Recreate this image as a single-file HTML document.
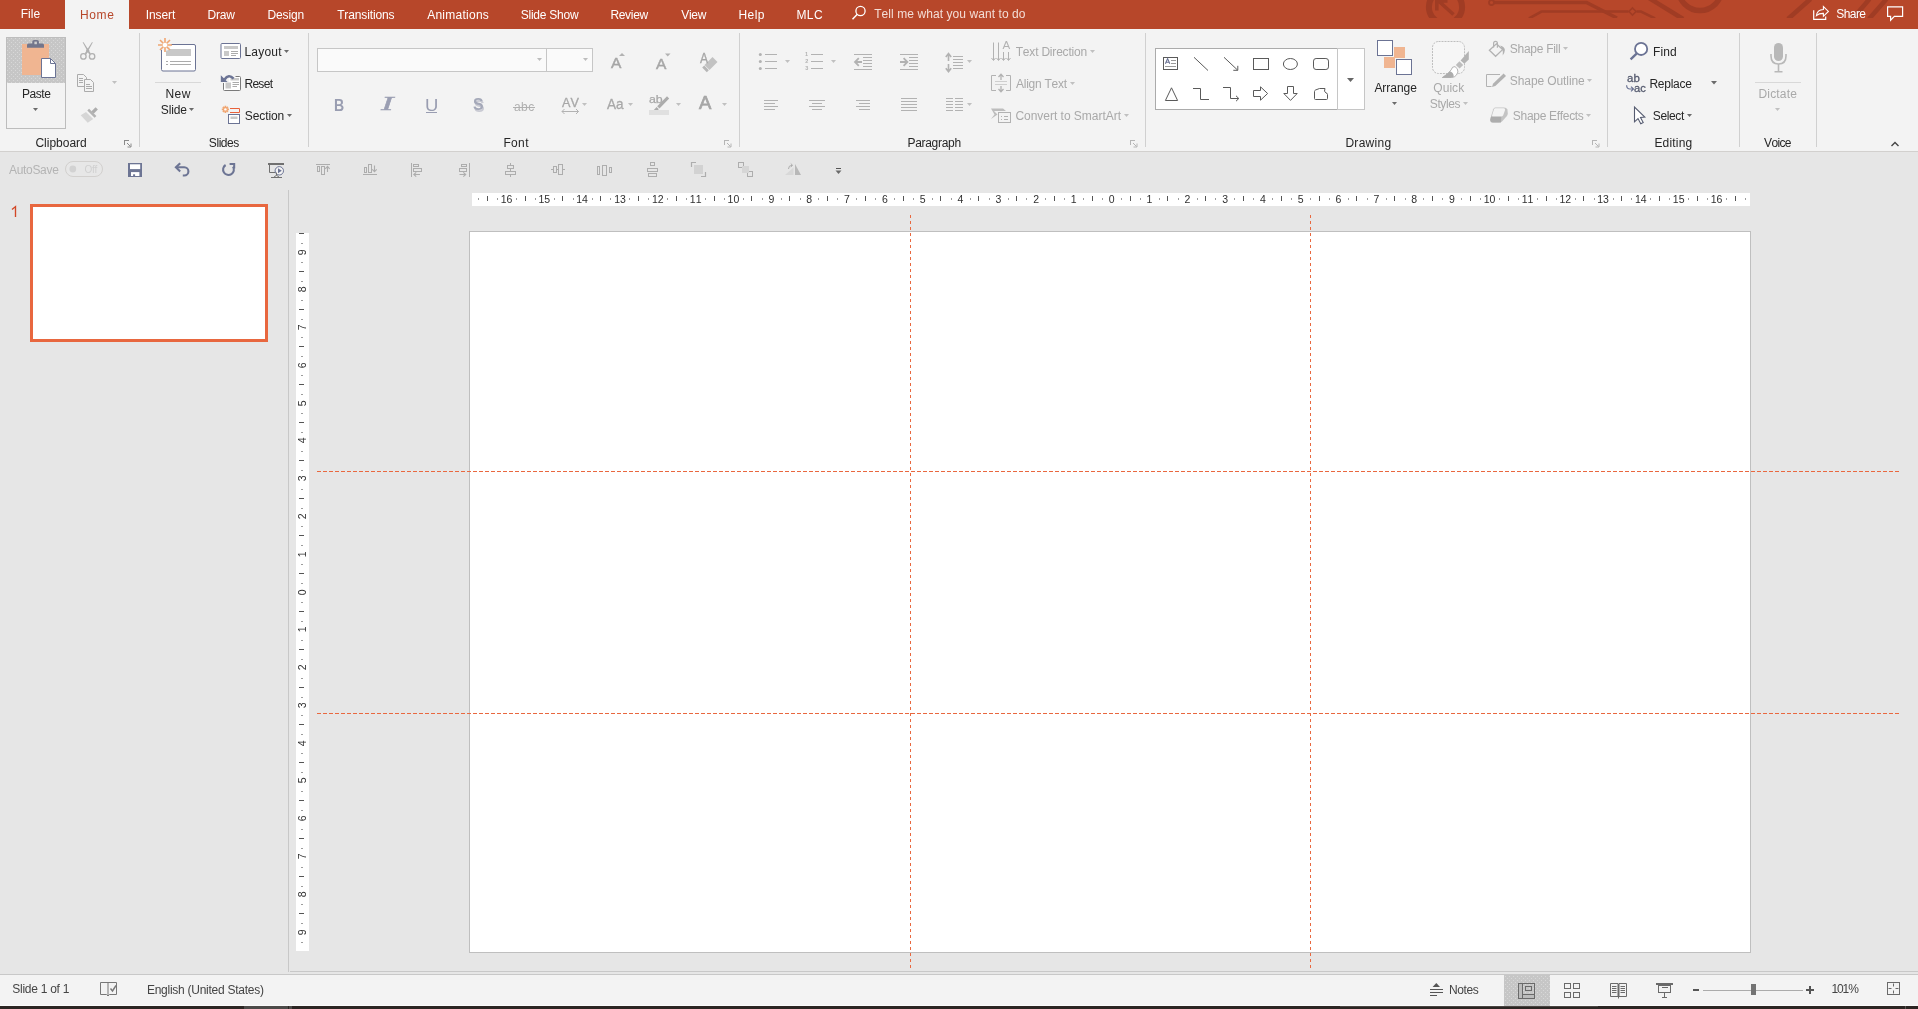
<!DOCTYPE html>
<html><head><meta charset="utf-8"><title>PowerPoint</title>
<style>
html,body{margin:0;padding:0;}
body{width:1918px;height:1009px;overflow:hidden;background:#E6E6E6;font-family:"Liberation Sans",sans-serif;font-kerning:none;}
#app{position:relative;width:1918px;height:1009px;overflow:hidden;background:#E6E6E6;}
#gfx{position:absolute;left:0;top:0;}
.t{position:absolute;white-space:pre;}
#txt{position:absolute;left:0;top:0;width:1918px;height:1009px;will-change:transform;}
.d{position:absolute;}
</style></head><body><div id="app">

<svg id="gfx" width="1918" height="1009" viewBox="0 0 1918 1009">
<rect x="0" y="0" width="1918" height="29" fill="#B7472A" />
<g clip-path="url(#cpat)" fill="none" stroke="#A03C24" stroke-linecap="butt">
<circle cx="1445.5" cy="7" r="16.6" stroke-width="6"/>
<path d="M1453.5 14.5 L1438 0.5 M1436.8 10.5 V1 H1447.5" stroke-width="3.6"/>
<path d="M1494 2.5 H1586.5 L1617 18" stroke-width="3.5"/>
<circle cx="1491.5" cy="2.5" r="2.5" stroke-width="1.8"/>
<path d="M1529 18.5 L1541.5 11.5 H1628.5 M1636.5 11.5 H1641 L1655 18.5" stroke-width="2.6"/>
<path d="M1632.5 8 l3.5 3.5 l-3.5 3.5 l-3.5 -3.5 z" stroke-width="1.6"/>
<path d="M1649 -2 L1683 19" stroke-width="4.5"/>
<circle cx="1700" cy="-11" r="21.5" stroke-width="5.5"/>
<path d="M1788 19 L1810.5 -1 M1869 19 L1886.5 -1 M1852.5 19 L1869.5 -1" stroke-width="4.6"/>
</g>
<defs><clipPath id="cpat"><rect x="1400" y="0" width="518" height="18"/></clipPath></defs>
<rect x="65" y="0" width="64" height="29" fill="#F3F3F3" />
<rect x="0" y="29" width="1918" height="122" fill="#F3F3F3" />
<rect x="0" y="151" width="1918" height="1" fill="#D2D0CE" shape-rendering="crispEdges"/>
<circle cx="860.5" cy="11" r="4.6" fill="none" stroke="#fff" stroke-width="1.3"/>
<path d="M857.3 14.3 L852.5 19.2" stroke="#fff" stroke-width="1.5"/>
<path d="M1813.7 10.2 V19.3 H1825.7 V16.4" fill="none" stroke="#fff" stroke-width="1.2"/>
<path d="M1816.4 15.7 C1816.9 11.6 1819.6 9.7 1823.4 9.5 V6.5 L1828.4 11.4 L1823.4 16.3 V13.4 C1820.5 13.3 1818.3 14 1816.4 15.7 Z" fill="none" stroke="#fff" stroke-width="1.1" stroke-linejoin="miter"/>
<path d="M1887.6 6.8 H1902.6 V16.4 H1894.4 L1890.6 20.2 V16.4 H1887.6 Z" fill="none" stroke="#fff" stroke-width="1.2"/>
<rect x="139" y="33" width="1" height="114" fill="#D0D0D0" shape-rendering="crispEdges"/>
<rect x="308" y="33" width="1" height="114" fill="#D0D0D0" shape-rendering="crispEdges"/>
<rect x="739" y="33" width="1" height="114" fill="#D0D0D0" shape-rendering="crispEdges"/>
<rect x="1145" y="33" width="1" height="114" fill="#D0D0D0" shape-rendering="crispEdges"/>
<rect x="1607" y="33" width="1" height="114" fill="#D0D0D0" shape-rendering="crispEdges"/>
<rect x="1739" y="33" width="1" height="114" fill="#D0D0D0" shape-rendering="crispEdges"/>
<rect x="1816" y="33" width="1" height="114" fill="#D0D0D0" shape-rendering="crispEdges"/>
<path d="M124.5 145 V140.5 H129" fill="none" stroke="#8A8A8A" stroke-width="1" shape-rendering="crispEdges"/>
<path d="M127 143 L130.5 146.5 M127.5 147 H131 V143.5" fill="none" stroke="#8A8A8A" stroke-width="1" />
<path d="M724.5 145 V140.5 H729" fill="none" stroke="#B5B5B5" stroke-width="1" shape-rendering="crispEdges"/>
<path d="M727 143 L730.5 146.5 M727.5 147 H731 V143.5" fill="none" stroke="#B5B5B5" stroke-width="1" />
<path d="M1130.5 145 V140.5 H1135" fill="none" stroke="#B5B5B5" stroke-width="1" shape-rendering="crispEdges"/>
<path d="M1133 143 L1136.5 146.5 M1133.5 147 H1137 V143.5" fill="none" stroke="#B5B5B5" stroke-width="1" />
<path d="M1592.5 145 V140.5 H1597" fill="none" stroke="#B5B5B5" stroke-width="1" shape-rendering="crispEdges"/>
<path d="M1595 143 L1598.5 146.5 M1595.5 147 H1599 V143.5" fill="none" stroke="#B5B5B5" stroke-width="1" />
<path d="M1891.5 146 L1895 142.5 L1898.5 146" fill="none" stroke="#444" stroke-width="1.4" />
<defs><pattern id="dots" x="6" y="37" width="4" height="4" patternUnits="userSpaceOnUse"><rect width="4" height="4" fill="#C6C6C6"/><rect x="1" y="1" width="1" height="1" fill="#D8D8D8"/><rect x="3" y="3" width="1" height="1" fill="#D8D8D8"/></pattern></defs>
<rect x="6" y="37" width="60" height="46" fill="url(#dots)" />
<rect x="6.5" y="37.5" width="59" height="91" fill="none" stroke="#BDBDBD" stroke-width="1" />
<rect x="22" y="44" width="27" height="31" fill="#F0B591" />
<path d="M27 47.8 V45 Q27 43.4 28.6 43.4 H32.3 V41.6 Q32.3 39.9 34 39.9 H37.2 Q38.9 39.9 38.9 41.6 V43.4 H42.4 Q44 43.4 44 45 V47.8 Z" fill="#73768C"  />
<rect x="34.4" y="41.6" width="2.5" height="2.6" fill="#CFCFCF" />
<path d="M41.5 58.5 H50.5 L55.5 63.5 V77.5 H41.5 Z" fill="#FFFFFF" stroke="#6B7394" stroke-width="1" />
<path d="M50.5 58.5 V63.5 H55.5" fill="none" stroke="#6B7394" stroke-width="1" />
<polygon points="33,108 38,108 35.5,111.0" fill="#6A6A6A"/>
<path d="M82.6 42.2 L83.6 42.2 L90.8 53.6 L89.2 54.6 Z M92.9 42.2 L91.9 42.2 L84.7 53.6 L86.3 54.6 Z" fill="#B0B0B0"  />
<path d="M86 50.5 L87.75 48 L89.5 50.5 L87.75 53 Z" fill="#B0B0B0"  />
<circle cx="83.4" cy="56.4" r="2.7" fill="none" stroke="#B0B0B0" stroke-width="1.3"/>
<circle cx="92.1" cy="56.4" r="2.7" fill="none" stroke="#B0B0B0" stroke-width="1.3"/>
<path d="M77.5 74.5 H83.5 L86.5 77.5 V86.5 H77.5 Z" fill="#F3F3F3" stroke="#ABABAB" stroke-width="1" />
<path d="M84.5 79.5 H90.5 L93.5 82.5 V91.5 H84.5 Z" fill="#F3F3F3" stroke="#ABABAB" stroke-width="1" />
<path d="M79 78.5 H83 M79 80.5 H83 M79 82.5 H83 M86 84.5 H90 M86 86.5 H92 M86 88.5 H92" fill="none" stroke="#ABABAB" stroke-width="1" />
<polygon points="112,81 117,81 114.5,84.0" fill="#C0C0C0"/>
<path d="M95.6 107.2 L97.9 109.5 L93.6 113.8 L91.3 111.5 Z" fill="#ADADAD"  />
<path d="M87.3 110.5 L89.1 108.7 L96.4 116 L94.6 117.8 Z" fill="#B3B3B3"  />
<path d="M86 111.9 L93.2 119.1 L87.7 122.7 L80.7 115.2 Z" fill="#D6D6D6"  />
<path d="M162.5 44.5 H194 Q195.5 44.5 195.5 46 V69.5 Q195.5 71 194 71 H163 Q161.5 71 161.5 69.5 V46 Q161.5 44.5 162.5 44.5 Z" fill="#FFFFFF" stroke="#6B7394" stroke-width="1" />
<rect x="166" y="49" width="25" height="7" fill="#C8C8C8" />
<path d="M166 61.5 H168 M170 61.5 H191 M166 64.5 H168 M170 64.5 H191" fill="none" stroke="#ABABAB" stroke-width="1" />
<circle cx="165" cy="45" r="6" fill="#F3F3F3"/>
<path d="M165 38 V52 M158 45 H172 M160 40 L170 50 M170 40 L160 50" fill="none" stroke="#F0A672" stroke-width="1.6" />
<circle cx="165" cy="45" r="2.3" fill="#FFFFFF"/>
<rect x="155" y="82" width="46" height="1" fill="#D8D8D8" shape-rendering="crispEdges"/>
<polygon points="189,108 194,108 191.5,111.0" fill="#6A6A6A"/>
<path d="M222 43.5 H239.5 Q240.5 43.5 240.5 44.5 V57.5 Q240.5 58.5 239.5 58.5 H222 Q221 58.5 221 57.5 V44.5 Q221 43.5 222 43.5 Z" fill="#FFFFFF" stroke="#6B7394" stroke-width="1" />
<rect x="224" y="46" width="14" height="3" fill="#C9C9C9" />
<rect x="224" y="51" width="5" height="5" fill="#C9C9C9" />
<path d="M231 51.5 H238 M231 53.5 H238 M231 55.5 H236" fill="none" stroke="#ABABAB" stroke-width="1" />
<polygon points="284,50 289,50 286.5,53.0" fill="#6A6A6A"/>
<path d="M235.5 76.5 H239.5 Q240.5 76.5 240.5 77.5 V89.5 Q240.5 90.5 239.5 90.5 H224.5 Q223.5 90.5 223.5 89.5 V83" fill="none" stroke="#7A7A7A" stroke-width="1" />
<rect x="224" y="82.5" width="16" height="7.5" fill="#FFFFFF" />
<rect x="229" y="77" width="11" height="6" fill="#FFFFFF" />
<rect x="230.5" y="78" width="8.5" height="2.5" fill="#C9C9C9" />
<rect x="225.5" y="82.5" width="5.5" height="6" fill="#C9C9C9" />
<path d="M232.5 82.5 H239 M232.5 84.5 H239 M232.5 86.5 H237" fill="none" stroke="#ABABAB" stroke-width="1" />
<path d="M220.8 75.2 V82 H227.6 Z" fill="#6B7394"  />
<path d="M224.6 79.4 Q228.6 73.6 233.6 78.6" fill="none" stroke="#6B7394" stroke-width="2.6" />
<path d="M230 108.5 H239.5 V112.5 H230" fill="none" stroke="#E8613A" stroke-width="1" />
<rect x="228.5" y="114.5" width="11" height="9" fill="#FFFFFF" stroke="#6B7394" stroke-width="1" />
<rect x="230.5" y="116.5" width="7" height="2.5" fill="#C9C9C9" />
<path d="M225.4 105.8 V113 M221.8 109.4 H229 M222.9 106.9 L227.9 111.9 M227.9 106.9 L222.9 111.9" fill="none" stroke="#F0A672" stroke-width="1.7" />
<circle cx="225.4" cy="109.4" r="1.2" fill="#fff"/>
<polygon points="287,114 292,114 289.5,117.0" fill="#6A6A6A"/>
<rect x="317.5" y="48.5" width="229" height="23" fill="#FAFAFA" stroke="#C6C6C6" stroke-width="1" />
<rect x="546.5" y="48.5" width="46" height="23" fill="#FAFAFA" stroke="#C6C6C6" stroke-width="1" />
<polygon points="537,58 542,58 539.5,61.0" fill="#BDBDBD"/>
<polygon points="583,58 588,58 585.5,61.0" fill="#BDBDBD"/>
<rect x="426" y="112" width="11" height="1" fill="#999DB1" shape-rendering="crispEdges"/>
<rect x="513" y="107" width="22" height="1" fill="#B0B0B0" shape-rendering="crispEdges"/>
<polygon points="619,56 622,53 625,56" fill="#B2B2B2"/>
<polygon points="665,53.5 670.5,53.5 667.75,56.5" fill="#B2B2B2"/>
<path d="M712.5 57 L717.5 62 L709.5 70 L704.5 65 Z" fill="#C2C2C2"  />
<path d="M704.3 65.6 L708.8 70.2 L706.8 72.2 L702.2 67.6 Z" fill="#B6B6B6"  />
<path d="M562 111.5 H578.5 M564.5 109 L562 111.5 L564.5 114 M576 109 L578.5 111.5 L576 114" fill="none" stroke="#B2B2B2" stroke-width="1" />
<polygon points="582,103 587,103 584.5,106.0" fill="#C0C0C0"/>
<polygon points="628,103 633,103 630.5,106.0" fill="#C0C0C0"/>
<path d="M667 96.3 L669.2 98.6 L659.5 108.6 L657.2 106.3 Z M656.6 107 L658.9 109.3 L657.5 110.2 H653.6 Z" fill="#ACACAC"  />
<rect x="649" y="110" width="20" height="5" fill="#E0E0E0" />
<polygon points="676,103 681,103 678.5,106.0" fill="#C0C0C0"/>
<polygon points="722,103 727,103 724.5,106.0" fill="#C0C0C0"/>
<circle cx="760.3" cy="54.5" r="1.5" fill="#B2B2B2"/>
<rect x="765" y="54.0" width="12" height="1" fill="#B2B2B2" shape-rendering="crispEdges"/>
<circle cx="760.3" cy="61.5" r="1.5" fill="#B2B2B2"/>
<rect x="765" y="61.0" width="12" height="1" fill="#B2B2B2" shape-rendering="crispEdges"/>
<circle cx="760.3" cy="68.5" r="1.5" fill="#B2B2B2"/>
<rect x="765" y="68.0" width="12" height="1" fill="#B2B2B2" shape-rendering="crispEdges"/>
<polygon points="785,60 790,60 787.5,63.0" fill="#C0C0C0"/>
<rect x="811" y="54.0" width="12" height="1" fill="#B2B2B2" shape-rendering="crispEdges"/>
<rect x="811" y="61.0" width="12" height="1" fill="#B2B2B2" shape-rendering="crispEdges"/>
<rect x="811" y="68.0" width="12" height="1" fill="#B2B2B2" shape-rendering="crispEdges"/>
<polygon points="831,60 836,60 833.5,63.0" fill="#C0C0C0"/>
<rect x="854" y="54" width="18" height="1" fill="#B2B2B2" shape-rendering="crispEdges"/>
<rect x="854" y="69" width="18" height="1" fill="#B2B2B2" shape-rendering="crispEdges"/>
<rect x="863" y="57" width="9" height="1" fill="#B2B2B2" shape-rendering="crispEdges"/>
<rect x="863" y="60" width="9" height="1" fill="#B2B2B2" shape-rendering="crispEdges"/>
<rect x="863" y="63" width="9" height="1" fill="#B2B2B2" shape-rendering="crispEdges"/>
<rect x="863" y="66" width="9" height="1" fill="#B2B2B2" shape-rendering="crispEdges"/>
<path d="M862 62 H855.5 M858.8 58.2 L855 62 L858.8 65.8" fill="none" stroke="#B2B2B2" stroke-width="1.8" />
<rect x="900" y="54" width="18" height="1" fill="#B2B2B2" shape-rendering="crispEdges"/>
<rect x="900" y="69" width="18" height="1" fill="#B2B2B2" shape-rendering="crispEdges"/>
<rect x="909" y="57" width="9" height="1" fill="#B2B2B2" shape-rendering="crispEdges"/>
<rect x="909" y="60" width="9" height="1" fill="#B2B2B2" shape-rendering="crispEdges"/>
<rect x="909" y="63" width="9" height="1" fill="#B2B2B2" shape-rendering="crispEdges"/>
<rect x="909" y="66" width="9" height="1" fill="#B2B2B2" shape-rendering="crispEdges"/>
<path d="M900 62 H907 M903.6 58.2 L907.4 62 L903.6 65.8" fill="none" stroke="#B2B2B2" stroke-width="1.8" />
<rect x="953" y="56" width="10" height="1" fill="#B2B2B2" shape-rendering="crispEdges"/>
<rect x="953" y="59" width="10" height="1" fill="#B2B2B2" shape-rendering="crispEdges"/>
<rect x="953" y="62" width="10" height="1" fill="#B2B2B2" shape-rendering="crispEdges"/>
<rect x="953" y="65" width="10" height="1" fill="#B2B2B2" shape-rendering="crispEdges"/>
<rect x="953" y="68" width="10" height="1" fill="#B2B2B2" shape-rendering="crispEdges"/>
<path d="M948.5 54 V61 M945.8 57 L948.5 53.6 L951.2 57 M948.5 64 V71 M945.8 68.2 L948.5 71.6 L951.2 68.2" fill="none" stroke="#B2B2B2" stroke-width="1.6" />
<polygon points="967,60 972,60 969.5,63.0" fill="#C0C0C0"/>
<rect x="764" y="100" width="14" height="1" fill="#B2B2B2" shape-rendering="crispEdges"/>
<rect x="764" y="103" width="11" height="1" fill="#B2B2B2" shape-rendering="crispEdges"/>
<rect x="764" y="106" width="14" height="1" fill="#B2B2B2" shape-rendering="crispEdges"/>
<rect x="764" y="109" width="11" height="1" fill="#B2B2B2" shape-rendering="crispEdges"/>
<rect x="809" y="100" width="16" height="1" fill="#B2B2B2" shape-rendering="crispEdges"/>
<rect x="812" y="103" width="10" height="1" fill="#B2B2B2" shape-rendering="crispEdges"/>
<rect x="809" y="106" width="16" height="1" fill="#B2B2B2" shape-rendering="crispEdges"/>
<rect x="812" y="109" width="10" height="1" fill="#B2B2B2" shape-rendering="crispEdges"/>
<rect x="856" y="100" width="14" height="1" fill="#B2B2B2" shape-rendering="crispEdges"/>
<rect x="859" y="103" width="11" height="1" fill="#B2B2B2" shape-rendering="crispEdges"/>
<rect x="856" y="106" width="14" height="1" fill="#B2B2B2" shape-rendering="crispEdges"/>
<rect x="859" y="109" width="11" height="1" fill="#B2B2B2" shape-rendering="crispEdges"/>
<rect x="901" y="98" width="16" height="1" fill="#B2B2B2" shape-rendering="crispEdges"/>
<rect x="901" y="101" width="16" height="1" fill="#B2B2B2" shape-rendering="crispEdges"/>
<rect x="901" y="104" width="16" height="1" fill="#B2B2B2" shape-rendering="crispEdges"/>
<rect x="901" y="107" width="16" height="1" fill="#B2B2B2" shape-rendering="crispEdges"/>
<rect x="901" y="110" width="16" height="1" fill="#B2B2B2" shape-rendering="crispEdges"/>
<rect x="946" y="98" width="7" height="1" fill="#B2B2B2" shape-rendering="crispEdges"/>
<rect x="955" y="98" width="8" height="1" fill="#B2B2B2" shape-rendering="crispEdges"/>
<rect x="946" y="101" width="7" height="1" fill="#B2B2B2" shape-rendering="crispEdges"/>
<rect x="955" y="101" width="8" height="1" fill="#B2B2B2" shape-rendering="crispEdges"/>
<rect x="946" y="104" width="7" height="1" fill="#B2B2B2" shape-rendering="crispEdges"/>
<rect x="955" y="104" width="8" height="1" fill="#B2B2B2" shape-rendering="crispEdges"/>
<rect x="946" y="107" width="7" height="1" fill="#B2B2B2" shape-rendering="crispEdges"/>
<rect x="955" y="107" width="8" height="1" fill="#B2B2B2" shape-rendering="crispEdges"/>
<rect x="946" y="110" width="7" height="1" fill="#B2B2B2" shape-rendering="crispEdges"/>
<rect x="955" y="110" width="8" height="1" fill="#B2B2B2" shape-rendering="crispEdges"/>
<polygon points="967,103 972,103 969.5,106.0" fill="#C0C0C0"/>
<path d="M993.5 42.5 V60 M998.5 42.5 V60 M991.5 58 L993.5 60.5 L995.5 58 M996.5 58 L998.5 60.5 L1000.5 58" fill="none" stroke="#B2B2B2" stroke-width="1" />
<path d="M1003.5 52 V60 M1008.5 52 V60 M1001.5 58 L1003.5 60.5 L1005.5 58 M1006.5 58 L1008.5 60.5 L1010.5 58" fill="none" stroke="#B2B2B2" stroke-width="1" />
<polygon points="1090,50 1095,50 1092.5,53.0" fill="#C0C0C0"/>
<path d="M996 75.5 H991.5 V90.5 H996 M1006 75.5 H1010.5 V90.5 H1006" fill="none" stroke="#B2B2B2" stroke-width="1" />
<path d="M995 81.5 H1007 M995 84.5 H1007" fill="none" stroke="#CFCFCF" stroke-width="1" />
<path d="M1001 74.5 V80 M998.5 77 L1001 74.3 L1003.5 77 M1001 86 V91.5 M998.5 89 L1001 91.7 L1003.5 89" fill="none" stroke="#B2B2B2" stroke-width="1.3" />
<polygon points="1070,82 1075,82 1072.5,85.0" fill="#C0C0C0"/>
<path d="M991 108.5 H1003 L1006 111 H994 L997.5 114.5 L991 119 L994.5 114.5 Z" fill="#BDBDBD"  />
<rect x="998.5" y="112.5" width="12" height="10" fill="#F3F3F3" stroke="#B2B2B2" stroke-width="1" />
<path d="M1001 116.5 H1002 M1004 116.5 H1008 M1001 119.5 H1002 M1004 119.5 H1008" fill="none" stroke="#B2B2B2" stroke-width="1" />
<polygon points="1124,114 1129,114 1126.5,117.0" fill="#C0C0C0"/>
<rect x="1155.5" y="48.5" width="182" height="61" fill="#FFFFFF" stroke="#ABABAB" stroke-width="1" />
<rect x="1337.5" y="48.5" width="27" height="61" fill="#FFFFFF" stroke="#C6C6C6" stroke-width="1" />
<polygon points="1347,78 1354,78 1350.5,82.0" fill="#666"/>
<rect x="1163.5" y="57.5" width="14" height="12" fill="#FFFFFF" stroke="#5A5A5A" stroke-width="1" />
<path d="M1165.4 63.8 L1167.6 58.6 L1169.8 63.8 M1166.3 62.2 H1168.9" fill="none" stroke="#6B7394" stroke-width="1.1" />
<path d="M1171 60.5 H1176 M1171 63.5 H1176 M1165 66.5 H1176" fill="none" stroke="#9A9A9A" stroke-width="1" />
<path d="M1194 57.3 L1208 70.5" fill="none" stroke="#5A5A5A" stroke-width="1" />
<path d="M1224 57.3 L1237.5 70 M1237.8 65.8 V70.3 H1233.3" fill="none" stroke="#5A5A5A" stroke-width="1" />
<rect x="1253.5" y="58.5" width="15" height="11" fill="none" stroke="#5A5A5A" stroke-width="1" />
<ellipse cx="1290.4" cy="64" rx="7" ry="5.5" fill="none" stroke="#5A5A5A" stroke-width="1"/>
<rect x="1313.5" y="58.5" width="15" height="11" rx="2.6" fill="none" stroke="#5A5A5A" stroke-width="1"/>
<path d="M1171.5 87.8 L1177.6 100.5 H1165.4 Z" fill="none" stroke="#5A5A5A" stroke-width="1" />
<path d="M1193 88.5 H1200.5 V99.5 H1209" fill="none" stroke="#5A5A5A" stroke-width="1" />
<path d="M1223 87.5 H1230.5 V98.5 H1238.5 M1236 95.8 L1238.8 98.5 L1236 101.2" fill="none" stroke="#5A5A5A" stroke-width="1" />
<path d="M1253.5 90.5 H1260.5 V86.8 L1267.6 93.5 L1260.5 100.2 V96.5 H1253.5 Z" fill="none" stroke="#5A5A5A" stroke-width="1" />
<path d="M1287.5 86.5 H1293.5 V93.5 H1297.2 L1290.5 100.4 L1283.8 93.5 H1287.5 Z" fill="none" stroke="#5A5A5A" stroke-width="1" />
<path d="M1314.5 91.5 Q1314.5 90.5 1315.5 90 L1319.5 88.5 H1325 Q1323.5 91.5 1326 93 Q1327.5 93.2 1327.5 94.5 V98.5 Q1327.5 99.5 1326.5 99.5 H1315.5 Q1314.5 99.5 1314.5 98.5 Z" fill="none" stroke="#5A5A5A" stroke-width="1" />
<rect x="1377.5" y="40.5" width="15" height="15" fill="#FFFFFF" stroke="#6B7394" stroke-width="1" />
<rect x="1394" y="47" width="11" height="11" fill="#F0B591" />
<rect x="1384" y="57" width="11" height="11" fill="#F0B591" />
<rect x="1396.5" y="59.5" width="15" height="15" fill="#FFFFFF" stroke="#6B7394" stroke-width="1" />
<polygon points="1392,102 1397,102 1394.5,105.0" fill="#6A6A6A"/>
<rect x="1432.5" y="41.5" width="32" height="32" rx="6" fill="#F6F6F6" stroke="#BEBEBE" stroke-width="1" stroke-dasharray="2 1"/>
<path d="M1468.8 51 V59.6 L1464.3 63.8 L1460.6 60.4 Z" fill="#B3B3B3"  />
<path d="M1459.4 61.3 L1463.2 65 L1459.6 68.6 L1455.8 65 Z" fill="#BDBDBD"  />
<path d="M1457.3 68.8 Q1459 72 1456.5 75 Q1454.5 77.5 1451.5 77.5 H1442.3 Q1450.5 72.5 1452.6 67.2 Q1455 65.2 1457.3 68.8 Z" fill="#FFFFFF" stroke="#B3B3B3" stroke-width="1" />
<path d="M1442.3 77.5 Q1447 74.5 1449.8 71.2 Q1453.5 72 1453.8 76.5 Q1452.6 77.5 1451.5 77.5 Z" fill="#ADADAD"  />
<polygon points="1463,102 1468,102 1465.5,105.0" fill="#C0C0C0"/>
<path d="M1493.6 47.6 V43.4 Q1493.6 41.4 1495.5 41.4 Q1497.4 41.4 1497.4 43.4 V47.8" fill="none" stroke="#B2B2B2" stroke-width="1.2" />
<path d="M1496.4 43.8 L1502.6 49.6 L1495.6 56.3 L1489.4 50.3 Z" fill="none" stroke="#B2B2B2" stroke-width="1.3" />
<path d="M1500.2 45.6 Q1504.6 47 1504.9 50 Q1504.6 53.5 1502.7 55.4 Q1503.2 51.5 1502.3 49.5 Z" fill="#B2B2B2"  />
<polygon points="1563,47 1568,47 1565.5,50.0" fill="#C0C0C0"/>
<path d="M1500 74.5 H1486.5 V86.5 H1491.5" fill="none" stroke="#B2B2B2" stroke-width="1" />
<path d="M1503.6 73.6 L1506 76 L1495.3 86 L1492 86.9 L1493 83.8 Z" fill="#B2B2B2"  />
<polygon points="1587,79 1592,79 1589.5,82.0" fill="#C0C0C0"/>
<path d="M1495.2 107.4 H1504 Q1506.6 107.4 1507.4 109.6 L1507.8 113.5 Q1507.8 115 1506.5 116.5 L1502 121.6 Q1500.8 122.6 1499 122.6 H1493 Q1490 122.6 1490.2 119.5 L1491 116.5 L1493.2 109.2 Q1493.8 107.4 1495.2 107.4 Z" fill="#C4C4C4"  />
<path d="M1495.4 108.3 H1503.6 Q1505.6 108.3 1505 110.3 L1503.2 115.2 Q1502.6 116.6 1501 116.6 H1493 Q1491.6 116.6 1492.1 115.2 L1493.9 109.6 Q1494.3 108.3 1495.4 108.3 Z" fill="#F4F4F4"  />
<path d="M1491 116.8 H1501.3 L1501 122.4 H1493 Q1490 122.4 1490.3 119.5 Z" fill="#ADADAD"  />
<polygon points="1586,114 1591,114 1588.5,117.0" fill="#C0C0C0"/>
<circle cx="1641.1" cy="48.9" r="6.1" fill="#FFFFFF" stroke="#6B7394" stroke-width="1.8"/>
<path d="M1636.6 53.6 L1630.6 59.4" fill="none" stroke="#6B7394" stroke-width="2.3" />
<path d="M1626.6 85.2 Q1626.8 89 1630 89 H1633.2 M1631 86.6 L1633.5 89 L1631 91.4" fill="none" stroke="#6B7394" stroke-width="1.2" />
<polygon points="1711,81 1717,81 1714.0,84.5" fill="#6A6A6A"/>
<path d="M1634.5 107 V121.8 L1638 118.6 L1640.8 123.8 L1643.2 122.6 L1640.5 117.4 L1644.8 117 Z" fill="#FFFFFF" stroke="#555B70" stroke-width="1.1" />
<polygon points="1687,114 1692,114 1689.5,117.0" fill="#6A6A6A"/>
<rect x="1774" y="43" width="9" height="18" rx="4.5" fill="#B8B8B8"/>
<path d="M1771 54 V56 Q1771 64 1778.5 64 Q1786 64 1786 56 V54" fill="none" stroke="#B8B8B8" stroke-width="1.6" />
<path d="M1778.5 64 V71 M1774.5 71.7 H1782.5" fill="none" stroke="#B8B8B8" stroke-width="1.6" />
<rect x="1755" y="82" width="46" height="1" fill="#D8D8D8" shape-rendering="crispEdges"/>
<polygon points="1775,108 1780,108 1777.5,111.0" fill="#C0C0C0"/>
<rect x="65.5" y="161.5" width="37" height="15" rx="7.5" fill="#E7E7E7" stroke="#D2D0CE" stroke-width="1"/>
<circle cx="72.8" cy="169" r="3.4" fill="#D2D2D2"/>
<rect x="128" y="163" width="14" height="14" fill="#6D7594" />
<rect x="130" y="164.3" width="10.2" height="4.8" fill="#FFFFFF" />
<rect x="131" y="172.1" width="8.4" height="3.9" fill="#FFFFFF" />
<rect x="133.1" y="174.3" width="2" height="2.7" fill="#6D7594" />
<path d="M176.5 167.3 H184.3 A4.1 4.1 0 0 1 184.3 175.5 H182.8" fill="none" stroke="#6D7594" stroke-width="2.1" />
<path d="M180.2 163.2 L175.9 167.3 L180.2 171.4" fill="none" stroke="#6D7594" stroke-width="2.1" />
<path d="M233 166.6 A5.4 5.4 0 1 1 225.6 165" fill="none" stroke="#6D7594" stroke-width="2.1" />
<path d="M229.6 163.9 H234.2 V168.4" fill="none" stroke="#6D7594" stroke-width="2" />
<rect x="268" y="163" width="16" height="2" fill="#707070" shape-rendering="crispEdges"/>
<path d="M269.5 165 V172.5 H276" fill="none" stroke="#707070" stroke-width="1" />
<circle cx="279.3" cy="170.8" r="4.2" fill="#F3F3F3" stroke="#6B7394" stroke-width="1"/>
<path d="M278 168.3 L281.8 170.8 L278 173.3 Z" fill="#6B7394"  />
<path d="M276.5 172.5 V175.5 M273.5 177.5 L276.5 175.2 L279.5 177.5 M271 177.5 H282" fill="none" stroke="#707070" stroke-width="1" />
<rect x="316" y="164" width="14" height="1" fill="#ADADAD" shape-rendering="crispEdges"/>
<rect x="317.5" y="166.5" width="2" height="5" fill="none" stroke="#ADADAD" stroke-width="1" />
<rect x="321.5" y="166.5" width="3" height="8" fill="none" stroke="#ADADAD" stroke-width="1" />
<path d="M327.5 172 V166.5 M325.3 168.8 L327.5 166.4 L329.7 168.8" fill="none" stroke="#ADADAD" stroke-width="1.1" />
<rect x="363" y="174" width="14" height="1" fill="#ADADAD" shape-rendering="crispEdges"/>
<rect x="364.5" y="167.5" width="2" height="5" fill="none" stroke="#ADADAD" stroke-width="1" />
<rect x="368.5" y="164.5" width="3" height="8" fill="none" stroke="#ADADAD" stroke-width="1" />
<path d="M374.5 165.5 V171.5 M372.3 169.4 L374.5 171.8 L376.7 169.4" fill="none" stroke="#ADADAD" stroke-width="1.1" />
<rect x="411" y="163" width="1" height="14" fill="#ADADAD" shape-rendering="crispEdges"/>
<rect x="413.5" y="164.5" width="5" height="2" fill="none" stroke="#ADADAD" stroke-width="1" />
<rect x="413.5" y="168.5" width="8" height="3" fill="none" stroke="#ADADAD" stroke-width="1" />
<path d="M420 174.5 H414 M416.2 172.3 L413.8 174.5 L416.2 176.7" fill="none" stroke="#ADADAD" stroke-width="1.1" />
<rect x="469" y="163" width="1" height="14" fill="#ADADAD" shape-rendering="crispEdges"/>
<rect x="461.5" y="164.5" width="5" height="2" fill="none" stroke="#ADADAD" stroke-width="1" />
<rect x="459.5" y="168.5" width="7" height="3" fill="none" stroke="#ADADAD" stroke-width="1" />
<path d="M459.5 174.5 H465.5 M463.3 172.3 L465.7 174.5 L463.3 176.7" fill="none" stroke="#ADADAD" stroke-width="1.1" />
<rect x="510" y="163" width="1" height="14" fill="#ADADAD" shape-rendering="crispEdges"/>
<rect x="507.5" y="165.5" width="6" height="3" fill="#E6E6E6" stroke="#ADADAD" stroke-width="1" />
<rect x="505.5" y="171.5" width="10" height="3" fill="#E6E6E6" stroke="#ADADAD" stroke-width="1" />
<rect x="551" y="169" width="14" height="1" fill="#ADADAD" shape-rendering="crispEdges"/>
<rect x="553.5" y="166.5" width="3" height="6" fill="#E6E6E6" stroke="#ADADAD" stroke-width="1" />
<rect x="558.5" y="164.5" width="4" height="10" fill="#E6E6E6" stroke="#ADADAD" stroke-width="1" />
<rect x="597.5" y="166.5" width="2" height="8" fill="none" stroke="#ADADAD" stroke-width="1" />
<rect x="602.5" y="165.5" width="4" height="10" fill="none" stroke="#ADADAD" stroke-width="1" />
<rect x="609.5" y="167.5" width="2" height="5" fill="none" stroke="#ADADAD" stroke-width="1" />
<rect x="650.5" y="162.5" width="4" height="3" fill="none" stroke="#ADADAD" stroke-width="1" />
<rect x="647.5" y="168.5" width="10" height="3" fill="none" stroke="#ADADAD" stroke-width="1" />
<rect x="648.5" y="173.5" width="8" height="3" fill="none" stroke="#ADADAD" stroke-width="1" />
<path d="M696 162.5 H691.5 V167 M701 176.5 H705.5 V172" fill="none" stroke="#ADADAD" stroke-width="1.2" />
<rect x="694" y="165" width="9" height="9" fill="#D2D2D2"/>
<rect x="738.5" y="162.5" width="5" height="5" fill="none" stroke="#ADADAD" stroke-width="1" />
<rect x="747.5" y="171.5" width="5" height="5" fill="none" stroke="#ADADAD" stroke-width="1" />
<rect x="742" y="166" width="7" height="7" fill="#D6D6D6"/>
<path d="M785 175 L793.5 175 L793.5 167.5 Z" fill="#D8D8D8"  />
<path d="M795 175 V164 L801 175 Z" fill="#B8B8B8"  />
<path d="M788.5 169 Q788.5 165.3 792 165.3 M790.8 163.6 L792.6 165.3 L790.8 167" fill="none" stroke="#ADADAD" stroke-width="1" />
<rect x="836" y="168" width="5" height="1" fill="#555" shape-rendering="crispEdges"/>
<polygon points="835.5,170.5 841.5,170.5 838.5,174.0" fill="#6A6A6A"/>
<rect x="288" y="190" width="1" height="782" fill="#C8C8C8" shape-rendering="crispEdges"/>
<rect x="30" y="204" width="238" height="138" fill="#E8673F" />
<rect x="33" y="207" width="232" height="132" fill="#FFFFFF" />
<path d="M12 209.6 L15.5 206.6 V217" fill="none" stroke="#D24726" stroke-width="1.35" />
<rect x="472" y="193" width="1278" height="13" fill="#FFFFFF" />
<rect x="296" y="233" width="13" height="718" fill="#FFFFFF" />
<rect x="478" y="198" width="1" height="2" fill="#9C9C9C" />
<rect x="487" y="196" width="1" height="5" fill="#555" shape-rendering="crispEdges"/>
<rect x="497" y="198" width="1" height="2" fill="#9C9C9C" />
<rect x="516" y="198" width="1" height="2" fill="#9C9C9C" />
<rect x="525" y="196" width="1" height="5" fill="#555" shape-rendering="crispEdges"/>
<rect x="535" y="198" width="1" height="2" fill="#9C9C9C" />
<rect x="554" y="198" width="1" height="2" fill="#9C9C9C" />
<rect x="562" y="196" width="1" height="5" fill="#555" shape-rendering="crispEdges"/>
<rect x="573" y="198" width="1" height="2" fill="#9C9C9C" />
<rect x="592" y="198" width="1" height="2" fill="#9C9C9C" />
<rect x="600" y="196" width="1" height="5" fill="#555" shape-rendering="crispEdges"/>
<rect x="610" y="198" width="1" height="2" fill="#9C9C9C" />
<rect x="629" y="198" width="1" height="2" fill="#9C9C9C" />
<rect x="638" y="196" width="1" height="5" fill="#555" shape-rendering="crispEdges"/>
<rect x="648" y="198" width="1" height="2" fill="#9C9C9C" />
<rect x="667" y="198" width="1" height="2" fill="#9C9C9C" />
<rect x="676" y="196" width="1" height="5" fill="#555" shape-rendering="crispEdges"/>
<rect x="686" y="198" width="1" height="2" fill="#9C9C9C" />
<rect x="705" y="198" width="1" height="2" fill="#9C9C9C" />
<rect x="714" y="196" width="1" height="5" fill="#555" shape-rendering="crispEdges"/>
<rect x="724" y="198" width="1" height="2" fill="#9C9C9C" />
<rect x="743" y="198" width="1" height="2" fill="#9C9C9C" />
<rect x="751" y="196" width="1" height="5" fill="#555" shape-rendering="crispEdges"/>
<rect x="762" y="198" width="1" height="2" fill="#9C9C9C" />
<rect x="781" y="198" width="1" height="2" fill="#9C9C9C" />
<rect x="789" y="196" width="1" height="5" fill="#555" shape-rendering="crispEdges"/>
<rect x="800" y="198" width="1" height="2" fill="#9C9C9C" />
<rect x="818" y="198" width="1" height="2" fill="#9C9C9C" />
<rect x="827" y="196" width="1" height="5" fill="#555" shape-rendering="crispEdges"/>
<rect x="837" y="198" width="1" height="2" fill="#9C9C9C" />
<rect x="856" y="198" width="1" height="2" fill="#9C9C9C" />
<rect x="865" y="196" width="1" height="5" fill="#555" shape-rendering="crispEdges"/>
<rect x="875" y="198" width="1" height="2" fill="#9C9C9C" />
<rect x="894" y="198" width="1" height="2" fill="#9C9C9C" />
<rect x="903" y="196" width="1" height="5" fill="#555" shape-rendering="crispEdges"/>
<rect x="913" y="198" width="1" height="2" fill="#9C9C9C" />
<rect x="932" y="198" width="1" height="2" fill="#9C9C9C" />
<rect x="940" y="196" width="1" height="5" fill="#555" shape-rendering="crispEdges"/>
<rect x="951" y="198" width="1" height="2" fill="#9C9C9C" />
<rect x="970" y="198" width="1" height="2" fill="#9C9C9C" />
<rect x="978" y="196" width="1" height="5" fill="#555" shape-rendering="crispEdges"/>
<rect x="989" y="198" width="1" height="2" fill="#9C9C9C" />
<rect x="1008" y="198" width="1" height="2" fill="#9C9C9C" />
<rect x="1016" y="196" width="1" height="5" fill="#555" shape-rendering="crispEdges"/>
<rect x="1026" y="198" width="1" height="2" fill="#9C9C9C" />
<rect x="1045" y="198" width="1" height="2" fill="#9C9C9C" />
<rect x="1054" y="196" width="1" height="5" fill="#555" shape-rendering="crispEdges"/>
<rect x="1064" y="198" width="1" height="2" fill="#9C9C9C" />
<rect x="1083" y="198" width="1" height="2" fill="#9C9C9C" />
<rect x="1092" y="196" width="1" height="5" fill="#555" shape-rendering="crispEdges"/>
<rect x="1102" y="198" width="1" height="2" fill="#9C9C9C" />
<rect x="1121" y="198" width="1" height="2" fill="#9C9C9C" />
<rect x="1130" y="196" width="1" height="5" fill="#555" shape-rendering="crispEdges"/>
<rect x="1140" y="198" width="1" height="2" fill="#9C9C9C" />
<rect x="1159" y="198" width="1" height="2" fill="#9C9C9C" />
<rect x="1167" y="196" width="1" height="5" fill="#555" shape-rendering="crispEdges"/>
<rect x="1178" y="198" width="1" height="2" fill="#9C9C9C" />
<rect x="1197" y="198" width="1" height="2" fill="#9C9C9C" />
<rect x="1205" y="196" width="1" height="5" fill="#555" shape-rendering="crispEdges"/>
<rect x="1215" y="198" width="1" height="2" fill="#9C9C9C" />
<rect x="1234" y="198" width="1" height="2" fill="#9C9C9C" />
<rect x="1243" y="196" width="1" height="5" fill="#555" shape-rendering="crispEdges"/>
<rect x="1253" y="198" width="1" height="2" fill="#9C9C9C" />
<rect x="1272" y="198" width="1" height="2" fill="#9C9C9C" />
<rect x="1281" y="196" width="1" height="5" fill="#555" shape-rendering="crispEdges"/>
<rect x="1291" y="198" width="1" height="2" fill="#9C9C9C" />
<rect x="1310" y="198" width="1" height="2" fill="#9C9C9C" />
<rect x="1319" y="196" width="1" height="5" fill="#555" shape-rendering="crispEdges"/>
<rect x="1329" y="198" width="1" height="2" fill="#9C9C9C" />
<rect x="1348" y="198" width="1" height="2" fill="#9C9C9C" />
<rect x="1356" y="196" width="1" height="5" fill="#555" shape-rendering="crispEdges"/>
<rect x="1367" y="198" width="1" height="2" fill="#9C9C9C" />
<rect x="1386" y="198" width="1" height="2" fill="#9C9C9C" />
<rect x="1394" y="196" width="1" height="5" fill="#555" shape-rendering="crispEdges"/>
<rect x="1405" y="198" width="1" height="2" fill="#9C9C9C" />
<rect x="1423" y="198" width="1" height="2" fill="#9C9C9C" />
<rect x="1432" y="196" width="1" height="5" fill="#555" shape-rendering="crispEdges"/>
<rect x="1442" y="198" width="1" height="2" fill="#9C9C9C" />
<rect x="1461" y="198" width="1" height="2" fill="#9C9C9C" />
<rect x="1470" y="196" width="1" height="5" fill="#555" shape-rendering="crispEdges"/>
<rect x="1480" y="198" width="1" height="2" fill="#9C9C9C" />
<rect x="1499" y="198" width="1" height="2" fill="#9C9C9C" />
<rect x="1508" y="196" width="1" height="5" fill="#555" shape-rendering="crispEdges"/>
<rect x="1518" y="198" width="1" height="2" fill="#9C9C9C" />
<rect x="1537" y="198" width="1" height="2" fill="#9C9C9C" />
<rect x="1546" y="196" width="1" height="5" fill="#555" shape-rendering="crispEdges"/>
<rect x="1556" y="198" width="1" height="2" fill="#9C9C9C" />
<rect x="1575" y="198" width="1" height="2" fill="#9C9C9C" />
<rect x="1583" y="196" width="1" height="5" fill="#555" shape-rendering="crispEdges"/>
<rect x="1594" y="198" width="1" height="2" fill="#9C9C9C" />
<rect x="1613" y="198" width="1" height="2" fill="#9C9C9C" />
<rect x="1621" y="196" width="1" height="5" fill="#555" shape-rendering="crispEdges"/>
<rect x="1631" y="198" width="1" height="2" fill="#9C9C9C" />
<rect x="1650" y="198" width="1" height="2" fill="#9C9C9C" />
<rect x="1659" y="196" width="1" height="5" fill="#555" shape-rendering="crispEdges"/>
<rect x="1669" y="198" width="1" height="2" fill="#9C9C9C" />
<rect x="1688" y="198" width="1" height="2" fill="#9C9C9C" />
<rect x="1697" y="196" width="1" height="5" fill="#555" shape-rendering="crispEdges"/>
<rect x="1707" y="198" width="1" height="2" fill="#9C9C9C" />
<rect x="1726" y="198" width="1" height="2" fill="#9C9C9C" />
<rect x="1735" y="196" width="1" height="5" fill="#555" shape-rendering="crispEdges"/>
<rect x="1745" y="198" width="1" height="2" fill="#9C9C9C" />
<rect x="299" y="233" width="5" height="1" fill="#555" shape-rendering="crispEdges"/>
<rect x="301" y="243" width="2" height="1" fill="#9C9C9C" />
<rect x="301" y="262" width="2" height="1" fill="#9C9C9C" />
<rect x="299" y="271" width="5" height="1" fill="#555" shape-rendering="crispEdges"/>
<rect x="301" y="281" width="2" height="1" fill="#9C9C9C" />
<rect x="301" y="300" width="2" height="1" fill="#9C9C9C" />
<rect x="299" y="309" width="5" height="1" fill="#555" shape-rendering="crispEdges"/>
<rect x="301" y="319" width="2" height="1" fill="#9C9C9C" />
<rect x="301" y="337" width="2" height="1" fill="#9C9C9C" />
<rect x="299" y="346" width="5" height="1" fill="#555" shape-rendering="crispEdges"/>
<rect x="301" y="356" width="2" height="1" fill="#9C9C9C" />
<rect x="301" y="375" width="2" height="1" fill="#9C9C9C" />
<rect x="299" y="384" width="5" height="1" fill="#555" shape-rendering="crispEdges"/>
<rect x="301" y="394" width="2" height="1" fill="#9C9C9C" />
<rect x="301" y="413" width="2" height="1" fill="#9C9C9C" />
<rect x="299" y="422" width="5" height="1" fill="#555" shape-rendering="crispEdges"/>
<rect x="301" y="432" width="2" height="1" fill="#9C9C9C" />
<rect x="301" y="451" width="2" height="1" fill="#9C9C9C" />
<rect x="299" y="460" width="5" height="1" fill="#555" shape-rendering="crispEdges"/>
<rect x="301" y="470" width="2" height="1" fill="#9C9C9C" />
<rect x="301" y="489" width="2" height="1" fill="#9C9C9C" />
<rect x="299" y="498" width="5" height="1" fill="#555" shape-rendering="crispEdges"/>
<rect x="301" y="508" width="2" height="1" fill="#9C9C9C" />
<rect x="301" y="526" width="2" height="1" fill="#9C9C9C" />
<rect x="299" y="535" width="5" height="1" fill="#555" shape-rendering="crispEdges"/>
<rect x="301" y="545" width="2" height="1" fill="#9C9C9C" />
<rect x="301" y="564" width="2" height="1" fill="#9C9C9C" />
<rect x="299" y="573" width="5" height="1" fill="#555" shape-rendering="crispEdges"/>
<rect x="301" y="583" width="2" height="1" fill="#9C9C9C" />
<rect x="301" y="602" width="2" height="1" fill="#9C9C9C" />
<rect x="299" y="611" width="5" height="1" fill="#555" shape-rendering="crispEdges"/>
<rect x="301" y="621" width="2" height="1" fill="#9C9C9C" />
<rect x="301" y="640" width="2" height="1" fill="#9C9C9C" />
<rect x="299" y="649" width="5" height="1" fill="#555" shape-rendering="crispEdges"/>
<rect x="301" y="659" width="2" height="1" fill="#9C9C9C" />
<rect x="301" y="678" width="2" height="1" fill="#9C9C9C" />
<rect x="299" y="687" width="5" height="1" fill="#555" shape-rendering="crispEdges"/>
<rect x="301" y="697" width="2" height="1" fill="#9C9C9C" />
<rect x="301" y="715" width="2" height="1" fill="#9C9C9C" />
<rect x="299" y="724" width="5" height="1" fill="#555" shape-rendering="crispEdges"/>
<rect x="301" y="734" width="2" height="1" fill="#9C9C9C" />
<rect x="301" y="753" width="2" height="1" fill="#9C9C9C" />
<rect x="299" y="762" width="5" height="1" fill="#555" shape-rendering="crispEdges"/>
<rect x="301" y="772" width="2" height="1" fill="#9C9C9C" />
<rect x="301" y="791" width="2" height="1" fill="#9C9C9C" />
<rect x="299" y="800" width="5" height="1" fill="#555" shape-rendering="crispEdges"/>
<rect x="301" y="810" width="2" height="1" fill="#9C9C9C" />
<rect x="301" y="829" width="2" height="1" fill="#9C9C9C" />
<rect x="299" y="838" width="5" height="1" fill="#555" shape-rendering="crispEdges"/>
<rect x="301" y="848" width="2" height="1" fill="#9C9C9C" />
<rect x="301" y="867" width="2" height="1" fill="#9C9C9C" />
<rect x="299" y="876" width="5" height="1" fill="#555" shape-rendering="crispEdges"/>
<rect x="301" y="886" width="2" height="1" fill="#9C9C9C" />
<rect x="301" y="904" width="2" height="1" fill="#9C9C9C" />
<rect x="299" y="913" width="5" height="1" fill="#555" shape-rendering="crispEdges"/>
<rect x="301" y="923" width="2" height="1" fill="#9C9C9C" />
<rect x="301" y="942" width="2" height="1" fill="#9C9C9C" />
<rect x="469" y="231" width="1282" height="722" fill="#FFFFFF" />
<rect x="469.5" y="231.5" width="1281" height="721" fill="none" stroke="#BFBFBF" stroke-width="1" />
<rect x="290" y="971" width="1628" height="1" fill="#C8C8C8" shape-rendering="crispEdges"/>
<path d="M910.5 215 V969 M1310.5 215 V969" stroke="#E9683F" stroke-width="1" stroke-dasharray="3 3" shape-rendering="crispEdges" fill="none"/>
<path d="M317 471.5 H1899 M317 713.5 H1899" stroke="#E9683F" stroke-width="1" stroke-dasharray="4 2" shape-rendering="crispEdges" fill="none"/>
<rect x="0" y="974" width="1918" height="33" fill="#F3F3F3" />
<rect x="0" y="974" width="1918" height="1" fill="#C8C8C8" shape-rendering="crispEdges"/>
<rect x="0" y="1006" width="1918" height="3" fill="#2B2522" />
<rect x="244" y="1006" width="44" height="3" fill="#4C4A48" />
<rect x="289" y="1006" width="3" height="3" fill="#4C4A48" />
<rect x="1340" y="1006" width="258" height="1" fill="#4A4542" />
<rect x="0" y="1005" width="1918" height="1" fill="#FAFAFA" shape-rendering="crispEdges"/>
<rect x="1504" y="1005" width="46" height="1" fill="#C6C6C6" />
<rect x="1905" y="1006" width="1" height="3" fill="#5A5552" shape-rendering="crispEdges"/>
<path d="M100.5 982.5 H108 V996 L106.5 994.5 H100.5 Z M108 982.5 H116.5 V994.5 H109.5 L108 996" fill="none" stroke="#777" stroke-width="1" />
<path d="M110.5 988.5 L112.5 991 L116 985.5" fill="none" stroke="#777" stroke-width="1.4" />
<path d="M1436.3 983 L1440 987 H1432.6 Z" fill="#555"  />
<path d="M1430 989.5 H1443 M1430 992.5 H1443 M1430 995.5 H1437" fill="none" stroke="#555" stroke-width="1" />
<rect x="1504" y="975" width="46" height="31" fill="url(#dots)" />
<rect x="1519" y="984" width="3" height="14" fill="#BCBCBC" />
<rect x="1523" y="995" width="11" height="3" fill="#BCBCBC" />
<rect x="1518.5" y="983.5" width="16" height="15" fill="none" stroke="#6A6A6A" stroke-width="1" />
<rect x="1522" y="984" width="1" height="14" fill="#6A6A6A" shape-rendering="crispEdges"/>
<rect x="1523" y="994" width="11" height="1" fill="#6A6A6A" shape-rendering="crispEdges"/>
<rect x="1525.5" y="986.5" width="6" height="4" fill="none" stroke="#6A6A6A" stroke-width="1" />
<rect x="1564.5" y="983.5" width="6" height="5" fill="none" stroke="#6A6A6A" stroke-width="1" />
<rect x="1573.5" y="983.5" width="6" height="5" fill="none" stroke="#6A6A6A" stroke-width="1" />
<rect x="1564.5" y="992.5" width="6" height="5" fill="none" stroke="#6A6A6A" stroke-width="1" />
<rect x="1573.5" y="992.5" width="6" height="5" fill="none" stroke="#6A6A6A" stroke-width="1" />
<path d="M1610.5 983.5 H1618 V996.5 H1610.5 Z M1619 983.5 H1626.5 V996.5 H1619 Z" fill="none" stroke="#6A6A6A" stroke-width="1" />
<path d="M1612 986.5 H1616.5 M1612 988.5 H1616.5 M1612 990.5 H1616.5 M1612 992.5 H1616.5 M1620.5 986.5 H1625 M1620.5 988.5 H1625 M1620.5 990.5 H1625 M1620.5 992.5 H1625" fill="none" stroke="#6A6A6A" stroke-width="1" />
<path d="M1618.5 984 V998.5" fill="none" stroke="#6A6A6A" stroke-width="1" />
<rect x="1656" y="983" width="17" height="2" fill="#6A6A6A" shape-rendering="crispEdges"/>
<rect x="1658.5" y="985.5" width="12" height="7" fill="none" stroke="#6A6A6A" stroke-width="1" />
<rect x="1662" y="987" width="6" height="1" fill="#6A6A6A" shape-rendering="crispEdges"/>
<path d="M1664.5 993 V997 M1662 997.5 H1667" fill="none" stroke="#6A6A6A" stroke-width="1" />
<rect x="1693" y="989" width="6" height="2" fill="#555" shape-rendering="crispEdges"/>
<rect x="1703" y="990" width="100" height="1" fill="#ABABAB" shape-rendering="crispEdges"/>
<rect x="1751" y="984" width="5" height="11" fill="#737373" />
<rect x="1806" y="989" width="8" height="2" fill="#555" shape-rendering="crispEdges"/>
<rect x="1809" y="986" width="2" height="8" fill="#555" shape-rendering="crispEdges"/>
<rect x="1887.5" y="982.5" width="12" height="12" fill="none" stroke="#6A6A6A" stroke-width="1" />
<path d="M1893.5 983.5 V986.5 M1893.5 990.5 V993.5 M1888.5 988.5 H1891.5 M1895.5 988.5 H1898.5" fill="none" stroke="#6A6A6A" stroke-width="1" />
</svg>
<div id="txt">
<span class="t" style="left:20.67px;top:7.89px;font-size:12px;line-height:12px;letter-spacing:0.061px;color:#FFFFFF;">File</span>
<span class="t" style="left:79.92px;top:8.89px;font-size:12px;line-height:12px;letter-spacing:0.669px;color:#B7472A;">Home</span>
<span class="t" style="left:145.69px;top:8.89px;font-size:12px;line-height:12px;letter-spacing:-0.083px;color:#FFFFFF;">Insert</span>
<span class="t" style="left:207.42px;top:8.89px;font-size:12px;line-height:12px;letter-spacing:-0.182px;color:#FFFFFF;">Draw</span>
<span class="t" style="left:267.42px;top:8.89px;font-size:12px;line-height:12px;letter-spacing:-0.118px;color:#FFFFFF;">Design</span>
<span class="t" style="left:337.13px;top:8.89px;font-size:12px;line-height:12px;letter-spacing:-0.123px;color:#FFFFFF;">Transitions</span>
<span class="t" style="left:427.13px;top:8.89px;font-size:12px;line-height:12px;letter-spacing:0.261px;color:#FFFFFF;">Animations</span>
<span class="t" style="left:520.66px;top:8.89px;font-size:12px;line-height:12px;letter-spacing:-0.224px;color:#FFFFFF;">Slide Show</span>
<span class="t" style="left:610.42px;top:8.89px;font-size:12px;line-height:12px;letter-spacing:-0.318px;color:#FFFFFF;">Review</span>
<span class="t" style="left:681.35px;top:8.89px;font-size:12px;line-height:12px;letter-spacing:-0.329px;color:#FFFFFF;">View</span>
<span class="t" style="left:738.42px;top:8.89px;font-size:12px;line-height:12px;letter-spacing:0.470px;color:#FFFFFF;">Help</span>
<span class="t" style="left:796.42px;top:8.89px;font-size:12px;line-height:12px;letter-spacing:0.403px;color:#FFFFFF;">MLC</span>
<span class="t" style="left:874.13px;top:7.89px;font-size:12px;line-height:12px;letter-spacing:0.076px;color:#F3DDD6;">Tell me what you want to do</span>
<span class="t" style="left:1836.36px;top:7.89px;font-size:12px;line-height:12px;letter-spacing:-0.611px;color:#FFFFFF;">Share</span>
<span class="t" style="left:35.39px;top:136.89px;font-size:12px;line-height:12px;letter-spacing:0.002px;color:#262626;">Clipboard</span>
<span class="t" style="left:208.86px;top:136.89px;font-size:12px;line-height:12px;letter-spacing:-0.441px;color:#262626;">Slides</span>
<span class="t" style="left:503.42px;top:136.89px;font-size:12px;line-height:12px;letter-spacing:0.354px;color:#262626;">Font</span>
<span class="t" style="left:907.42px;top:136.89px;font-size:12px;line-height:12px;letter-spacing:-0.284px;color:#262626;">Paragraph</span>
<span class="t" style="left:1345.42px;top:136.89px;font-size:12px;line-height:12px;letter-spacing:0.290px;color:#262626;">Drawing</span>
<span class="t" style="left:1654.42px;top:136.89px;font-size:12px;line-height:12px;letter-spacing:0.178px;color:#262626;">Editing</span>
<span class="t" style="left:1764.10px;top:136.89px;font-size:12px;line-height:12px;letter-spacing:-0.645px;color:#262626;">Voice</span>
<span class="t" style="left:21.92px;top:87.89px;font-size:12px;line-height:12px;letter-spacing:-0.417px;color:#262626;">Paste</span>
<span class="t" style="left:165.42px;top:87.89px;font-size:12px;line-height:12px;letter-spacing:0.475px;color:#262626;">New</span>
<span class="t" style="left:160.86px;top:103.89px;font-size:12px;line-height:12px;letter-spacing:-0.151px;color:#262626;">Slide</span>
<span class="t" style="left:244.42px;top:45.89px;font-size:12px;line-height:12px;letter-spacing:0.209px;color:#262626;">Layout</span>
<span class="t" style="left:244.42px;top:77.89px;font-size:12px;line-height:12px;letter-spacing:-0.694px;color:#262626;">Reset</span>
<span class="t" style="left:244.86px;top:109.89px;font-size:12px;line-height:12px;letter-spacing:-0.117px;color:#262626;">Section</span>
<span class="t" style="left:334.06px;top:96.87px;font-size:16.34px;line-height:16.34px;color:#999DB1;transform-origin:0 0;transform:scaleX(0.8630);font-weight:bold;">B</span>
<span class="t" style="left:380.82px;top:95.58px;font-size:17.86px;line-height:17.86px;color:#9A9EB2;transform-origin:0 0;transform:scaleX(2.0958);font-style:italic;font-family:'Liberation Serif';-webkit-text-stroke:0.35px #9A9EB2;">I</span>
<span class="t" style="left:424.57px;top:96.87px;font-size:16.34px;line-height:16.34px;color:#999DB1;transform-origin:0 0;transform:scaleX(1.1315);">U</span>
<span class="t" style="left:473.04px;top:96.36px;font-size:17.18px;line-height:17.18px;color:#C9CAD3;transform-origin:0 0;transform:scaleX(0.9230);font-weight:bold;margin-left:1px;margin-top:1.2px;">S</span>
<span class="t" style="left:472.54px;top:96.36px;font-size:17.18px;line-height:17.18px;color:#A4A8B8;transform-origin:0 0;transform:scaleX(0.9230);font-weight:bold;">S</span>
<span class="t" style="left:513.89px;top:100.89px;font-size:12px;line-height:12px;letter-spacing:0.489px;color:#B0B0B0;">abc</span>
<span class="t" style="left:610.97px;top:55.43px;font-size:15.08px;line-height:15.08px;color:#A6A6A6;transform-origin:0 0;transform:scaleX(1.0298);-webkit-text-stroke:0.45px #A6A6A6;">A</span>
<span class="t" style="left:655.97px;top:56.87px;font-size:14.80px;line-height:14.80px;color:#A6A6A6;transform-origin:0 0;transform:scaleX(1.0492);-webkit-text-stroke:0.45px #A6A6A6;">A</span>
<span class="t" style="left:699.98px;top:51.78px;font-size:13.97px;line-height:13.97px;color:#A6A6A6;transform-origin:0 0;transform:scaleX(0.8638);-webkit-text-stroke:0.3px #A6A6A6;">A</span>
<span class="t" style="left:561.98px;top:95.60px;font-size:12.99px;line-height:12.99px;color:#A8A8A8;transform-origin:0 0;transform:scaleX(0.9713);-webkit-text-stroke:0.3px #A8A8A8;">AV</span>
<span class="t" style="left:607.47px;top:97.27px;font-size:14.80px;line-height:14.80px;color:#A8A8A8;transform-origin:0 0;transform:scaleX(0.9127);-webkit-text-stroke:0.3px #A8A8A8;">Aa</span>
<span class="t" style="left:649.08px;top:93.94px;font-size:11.17px;line-height:11.17px;color:#A8A8A8;transform-origin:0 0;transform:scaleX(1.1059);-webkit-text-stroke:0.25px #A8A8A8;">ab</span>
<span class="t" style="left:698.71px;top:93.83px;font-size:18.16px;line-height:18.16px;color:#A6A6A6;transform-origin:0 0;transform:scaleX(1.0175);-webkit-text-stroke:0.7px #A6A6A6;">A</span>
<span class="t" style="left:805.05px;top:52.39px;font-size:5.5px;line-height:5.5px;letter-spacing:0.000px;color:#B2B2B2;font-weight:bold;">1</span>
<span class="t" style="left:805.21px;top:59.39px;font-size:5.5px;line-height:5.5px;letter-spacing:0.000px;color:#B2B2B2;font-weight:bold;">2</span>
<span class="t" style="left:805.27px;top:66.39px;font-size:5.5px;line-height:5.5px;letter-spacing:0.000px;color:#B2B2B2;font-weight:bold;">3</span>
<span class="t" style="left:1002.38px;top:40.32px;font-size:11.5px;line-height:11.5px;letter-spacing:0.000px;color:#B2B2B2;">A</span>
<span class="t" style="left:1015.73px;top:45.89px;font-size:12px;line-height:12px;letter-spacing:-0.198px;color:#A9A9A9;">Text Direction</span>
<span class="t" style="left:1015.98px;top:77.89px;font-size:12px;line-height:12px;letter-spacing:-0.249px;color:#A9A9A9;">Align Text</span>
<span class="t" style="left:1015.39px;top:109.89px;font-size:12px;line-height:12px;letter-spacing:-0.019px;color:#A9A9A9;">Convert to SmartArt</span>
<span class="t" style="left:1374.38px;top:81.89px;font-size:12px;line-height:12px;letter-spacing:-0.022px;color:#262626;">Arrange</span>
<span class="t" style="left:1433.33px;top:81.89px;font-size:12px;line-height:12px;letter-spacing:0.032px;color:#A9A9A9;">Quick</span>
<span class="t" style="left:1429.86px;top:97.89px;font-size:12px;line-height:12px;letter-spacing:-0.420px;color:#A9A9A9;">Styles</span>
<span class="t" style="left:1509.86px;top:42.89px;font-size:12px;line-height:12px;letter-spacing:-0.290px;color:#A9A9A9;">Shape Fill</span>
<span class="t" style="left:1509.86px;top:74.89px;font-size:12px;line-height:12px;letter-spacing:-0.102px;color:#A9A9A9;">Shape Outline</span>
<span class="t" style="left:1512.86px;top:109.89px;font-size:12px;line-height:12px;letter-spacing:-0.311px;color:#A9A9A9;">Shape Effects</span>
<span class="t" style="left:1652.92px;top:45.89px;font-size:12px;line-height:12px;letter-spacing:0.171px;color:#262626;">Find</span>
<span class="t" style="left:1626.51px;top:72.74px;font-size:11.17px;line-height:11.17px;color:#555A6E;transform-origin:0 0;transform:scaleX(1.0275);-webkit-text-stroke:0.3px #555A6E;">ab</span>
<span class="t" style="left:1634.33px;top:83.02px;font-size:11.32px;line-height:11.32px;color:#555A6E;transform-origin:0 0;transform:scaleX(0.9842);-webkit-text-stroke:0.3px #555A6E;">ac</span>
<span class="t" style="left:1649.42px;top:77.89px;font-size:12px;line-height:12px;letter-spacing:-0.252px;color:#262626;">Replace</span>
<span class="t" style="left:1652.86px;top:109.89px;font-size:12px;line-height:12px;letter-spacing:-0.394px;color:#262626;">Select</span>
<span class="t" style="left:1758.42px;top:87.89px;font-size:12px;line-height:12px;letter-spacing:0.195px;color:#A9A9A9;">Dictate</span>
<span class="t" style="left:8.98px;top:163.89px;font-size:12px;line-height:12px;letter-spacing:-0.311px;color:#B4B4B4;">AutoSave</span>
<span class="t" style="left:84.43px;top:164.59px;font-size:10px;line-height:10px;letter-spacing:-0.188px;color:#D0D0D0;">Off</span>
<span class="t" style="left:500.73px;top:194.16px;font-size:10.5px;line-height:10.5px;letter-spacing:0.000px;color:#303030;">16</span>
<span class="t" style="left:538.53px;top:194.16px;font-size:10.5px;line-height:10.5px;letter-spacing:0.000px;color:#303030;">15</span>
<span class="t" style="left:576.27px;top:194.16px;font-size:10.5px;line-height:10.5px;letter-spacing:0.000px;color:#303030;">14</span>
<span class="t" style="left:614.16px;top:194.16px;font-size:10.5px;line-height:10.5px;letter-spacing:0.000px;color:#303030;">13</span>
<span class="t" style="left:652.00px;top:194.16px;font-size:10.5px;line-height:10.5px;letter-spacing:0.000px;color:#303030;">12</span>
<span class="t" style="left:689.81px;top:194.16px;font-size:10.5px;line-height:10.5px;letter-spacing:0.000px;color:#303030;">11</span>
<span class="t" style="left:727.57px;top:194.16px;font-size:10.5px;line-height:10.5px;letter-spacing:0.000px;color:#303030;">10</span>
<span class="t" style="left:768.49px;top:194.16px;font-size:10.5px;line-height:10.5px;letter-spacing:0.000px;color:#303030;">9</span>
<span class="t" style="left:806.30px;top:194.16px;font-size:10.5px;line-height:10.5px;letter-spacing:0.000px;color:#303030;">8</span>
<span class="t" style="left:844.11px;top:194.16px;font-size:10.5px;line-height:10.5px;letter-spacing:0.000px;color:#303030;">7</span>
<span class="t" style="left:881.88px;top:194.16px;font-size:10.5px;line-height:10.5px;letter-spacing:0.000px;color:#303030;">6</span>
<span class="t" style="left:919.74px;top:194.16px;font-size:10.5px;line-height:10.5px;letter-spacing:0.000px;color:#303030;">5</span>
<span class="t" style="left:957.57px;top:194.16px;font-size:10.5px;line-height:10.5px;letter-spacing:0.000px;color:#303030;">4</span>
<span class="t" style="left:995.38px;top:194.16px;font-size:10.5px;line-height:10.5px;letter-spacing:0.000px;color:#303030;">3</span>
<span class="t" style="left:1033.16px;top:194.16px;font-size:10.5px;line-height:10.5px;letter-spacing:0.000px;color:#303030;">2</span>
<span class="t" style="left:1070.83px;top:194.16px;font-size:10.5px;line-height:10.5px;letter-spacing:0.000px;color:#303030;">1</span>
<span class="t" style="left:1108.78px;top:194.16px;font-size:10.5px;line-height:10.5px;letter-spacing:0.000px;color:#303030;">0</span>
<span class="t" style="left:1146.45px;top:194.16px;font-size:10.5px;line-height:10.5px;letter-spacing:0.000px;color:#303030;">1</span>
<span class="t" style="left:1184.40px;top:194.16px;font-size:10.5px;line-height:10.5px;letter-spacing:0.000px;color:#303030;">2</span>
<span class="t" style="left:1222.24px;top:194.16px;font-size:10.5px;line-height:10.5px;letter-spacing:0.000px;color:#303030;">3</span>
<span class="t" style="left:1260.05px;top:194.16px;font-size:10.5px;line-height:10.5px;letter-spacing:0.000px;color:#303030;">4</span>
<span class="t" style="left:1297.84px;top:194.16px;font-size:10.5px;line-height:10.5px;letter-spacing:0.000px;color:#303030;">5</span>
<span class="t" style="left:1335.60px;top:194.16px;font-size:10.5px;line-height:10.5px;letter-spacing:0.000px;color:#303030;">6</span>
<span class="t" style="left:1373.45px;top:194.16px;font-size:10.5px;line-height:10.5px;letter-spacing:0.000px;color:#303030;">7</span>
<span class="t" style="left:1411.26px;top:194.16px;font-size:10.5px;line-height:10.5px;letter-spacing:0.000px;color:#303030;">8</span>
<span class="t" style="left:1449.07px;top:194.16px;font-size:10.5px;line-height:10.5px;letter-spacing:0.000px;color:#303030;">9</span>
<span class="t" style="left:1483.77px;top:194.16px;font-size:10.5px;line-height:10.5px;letter-spacing:0.000px;color:#303030;">10</span>
<span class="t" style="left:1521.63px;top:194.16px;font-size:10.5px;line-height:10.5px;letter-spacing:0.000px;color:#303030;">11</span>
<span class="t" style="left:1559.44px;top:194.16px;font-size:10.5px;line-height:10.5px;letter-spacing:0.000px;color:#303030;">12</span>
<span class="t" style="left:1597.22px;top:194.16px;font-size:10.5px;line-height:10.5px;letter-spacing:0.000px;color:#303030;">13</span>
<span class="t" style="left:1634.95px;top:194.16px;font-size:10.5px;line-height:10.5px;letter-spacing:0.000px;color:#303030;">14</span>
<span class="t" style="left:1672.83px;top:194.16px;font-size:10.5px;line-height:10.5px;letter-spacing:0.000px;color:#303030;">15</span>
<span class="t" style="left:1710.65px;top:194.16px;font-size:10.5px;line-height:10.5px;letter-spacing:0.000px;color:#303030;">16</span>
<span class="t" style="left:299.38px;top:246.53px;width:5.84px;font-size:10.5px;line-height:10.5px;color:#303030;transform:rotate(-90deg);transform-origin:50% 50%;">9</span>
<span class="t" style="left:299.38px;top:284.31px;width:5.84px;font-size:10.5px;line-height:10.5px;color:#303030;transform:rotate(-90deg);transform-origin:50% 50%;">8</span>
<span class="t" style="left:299.38px;top:322.09px;width:5.84px;font-size:10.5px;line-height:10.5px;color:#303030;transform:rotate(-90deg);transform-origin:50% 50%;">7</span>
<span class="t" style="left:299.38px;top:359.87px;width:5.84px;font-size:10.5px;line-height:10.5px;color:#303030;transform:rotate(-90deg);transform-origin:50% 50%;">6</span>
<span class="t" style="left:299.38px;top:397.65px;width:5.84px;font-size:10.5px;line-height:10.5px;color:#303030;transform:rotate(-90deg);transform-origin:50% 50%;">5</span>
<span class="t" style="left:299.38px;top:435.43px;width:5.84px;font-size:10.5px;line-height:10.5px;color:#303030;transform:rotate(-90deg);transform-origin:50% 50%;">4</span>
<span class="t" style="left:299.38px;top:473.21px;width:5.84px;font-size:10.5px;line-height:10.5px;color:#303030;transform:rotate(-90deg);transform-origin:50% 50%;">3</span>
<span class="t" style="left:299.38px;top:510.99px;width:5.84px;font-size:10.5px;line-height:10.5px;color:#303030;transform:rotate(-90deg);transform-origin:50% 50%;">2</span>
<span class="t" style="left:299.38px;top:548.77px;width:5.84px;font-size:10.5px;line-height:10.5px;color:#303030;transform:rotate(-90deg);transform-origin:50% 50%;">1</span>
<span class="t" style="left:299.38px;top:586.55px;width:5.84px;font-size:10.5px;line-height:10.5px;color:#303030;transform:rotate(-90deg);transform-origin:50% 50%;">0</span>
<span class="t" style="left:299.38px;top:624.33px;width:5.84px;font-size:10.5px;line-height:10.5px;color:#303030;transform:rotate(-90deg);transform-origin:50% 50%;">1</span>
<span class="t" style="left:299.38px;top:662.11px;width:5.84px;font-size:10.5px;line-height:10.5px;color:#303030;transform:rotate(-90deg);transform-origin:50% 50%;">2</span>
<span class="t" style="left:299.38px;top:699.89px;width:5.84px;font-size:10.5px;line-height:10.5px;color:#303030;transform:rotate(-90deg);transform-origin:50% 50%;">3</span>
<span class="t" style="left:299.38px;top:737.67px;width:5.84px;font-size:10.5px;line-height:10.5px;color:#303030;transform:rotate(-90deg);transform-origin:50% 50%;">4</span>
<span class="t" style="left:299.38px;top:775.45px;width:5.84px;font-size:10.5px;line-height:10.5px;color:#303030;transform:rotate(-90deg);transform-origin:50% 50%;">5</span>
<span class="t" style="left:299.38px;top:813.23px;width:5.84px;font-size:10.5px;line-height:10.5px;color:#303030;transform:rotate(-90deg);transform-origin:50% 50%;">6</span>
<span class="t" style="left:299.38px;top:851.01px;width:5.84px;font-size:10.5px;line-height:10.5px;color:#303030;transform:rotate(-90deg);transform-origin:50% 50%;">7</span>
<span class="t" style="left:299.38px;top:888.79px;width:5.84px;font-size:10.5px;line-height:10.5px;color:#303030;transform:rotate(-90deg);transform-origin:50% 50%;">8</span>
<span class="t" style="left:299.38px;top:926.57px;width:5.84px;font-size:10.5px;line-height:10.5px;color:#303030;transform:rotate(-90deg);transform-origin:50% 50%;">9</span>
<span class="t" style="left:12.36px;top:982.89px;font-size:12px;line-height:12px;letter-spacing:-0.274px;color:#444444;">Slide 1 of 1</span>
<span class="t" style="left:146.92px;top:983.89px;font-size:12px;line-height:12px;letter-spacing:-0.259px;color:#444444;">English (United States)</span>
<span class="t" style="left:1449.02px;top:983.89px;font-size:12px;line-height:12px;letter-spacing:-0.382px;color:#444444;">Notes</span>
<span class="t" style="left:1831.49px;top:982.89px;font-size:12px;line-height:12px;letter-spacing:-1.117px;color:#444444;">101%</span>
</div>
</div></body></html>
